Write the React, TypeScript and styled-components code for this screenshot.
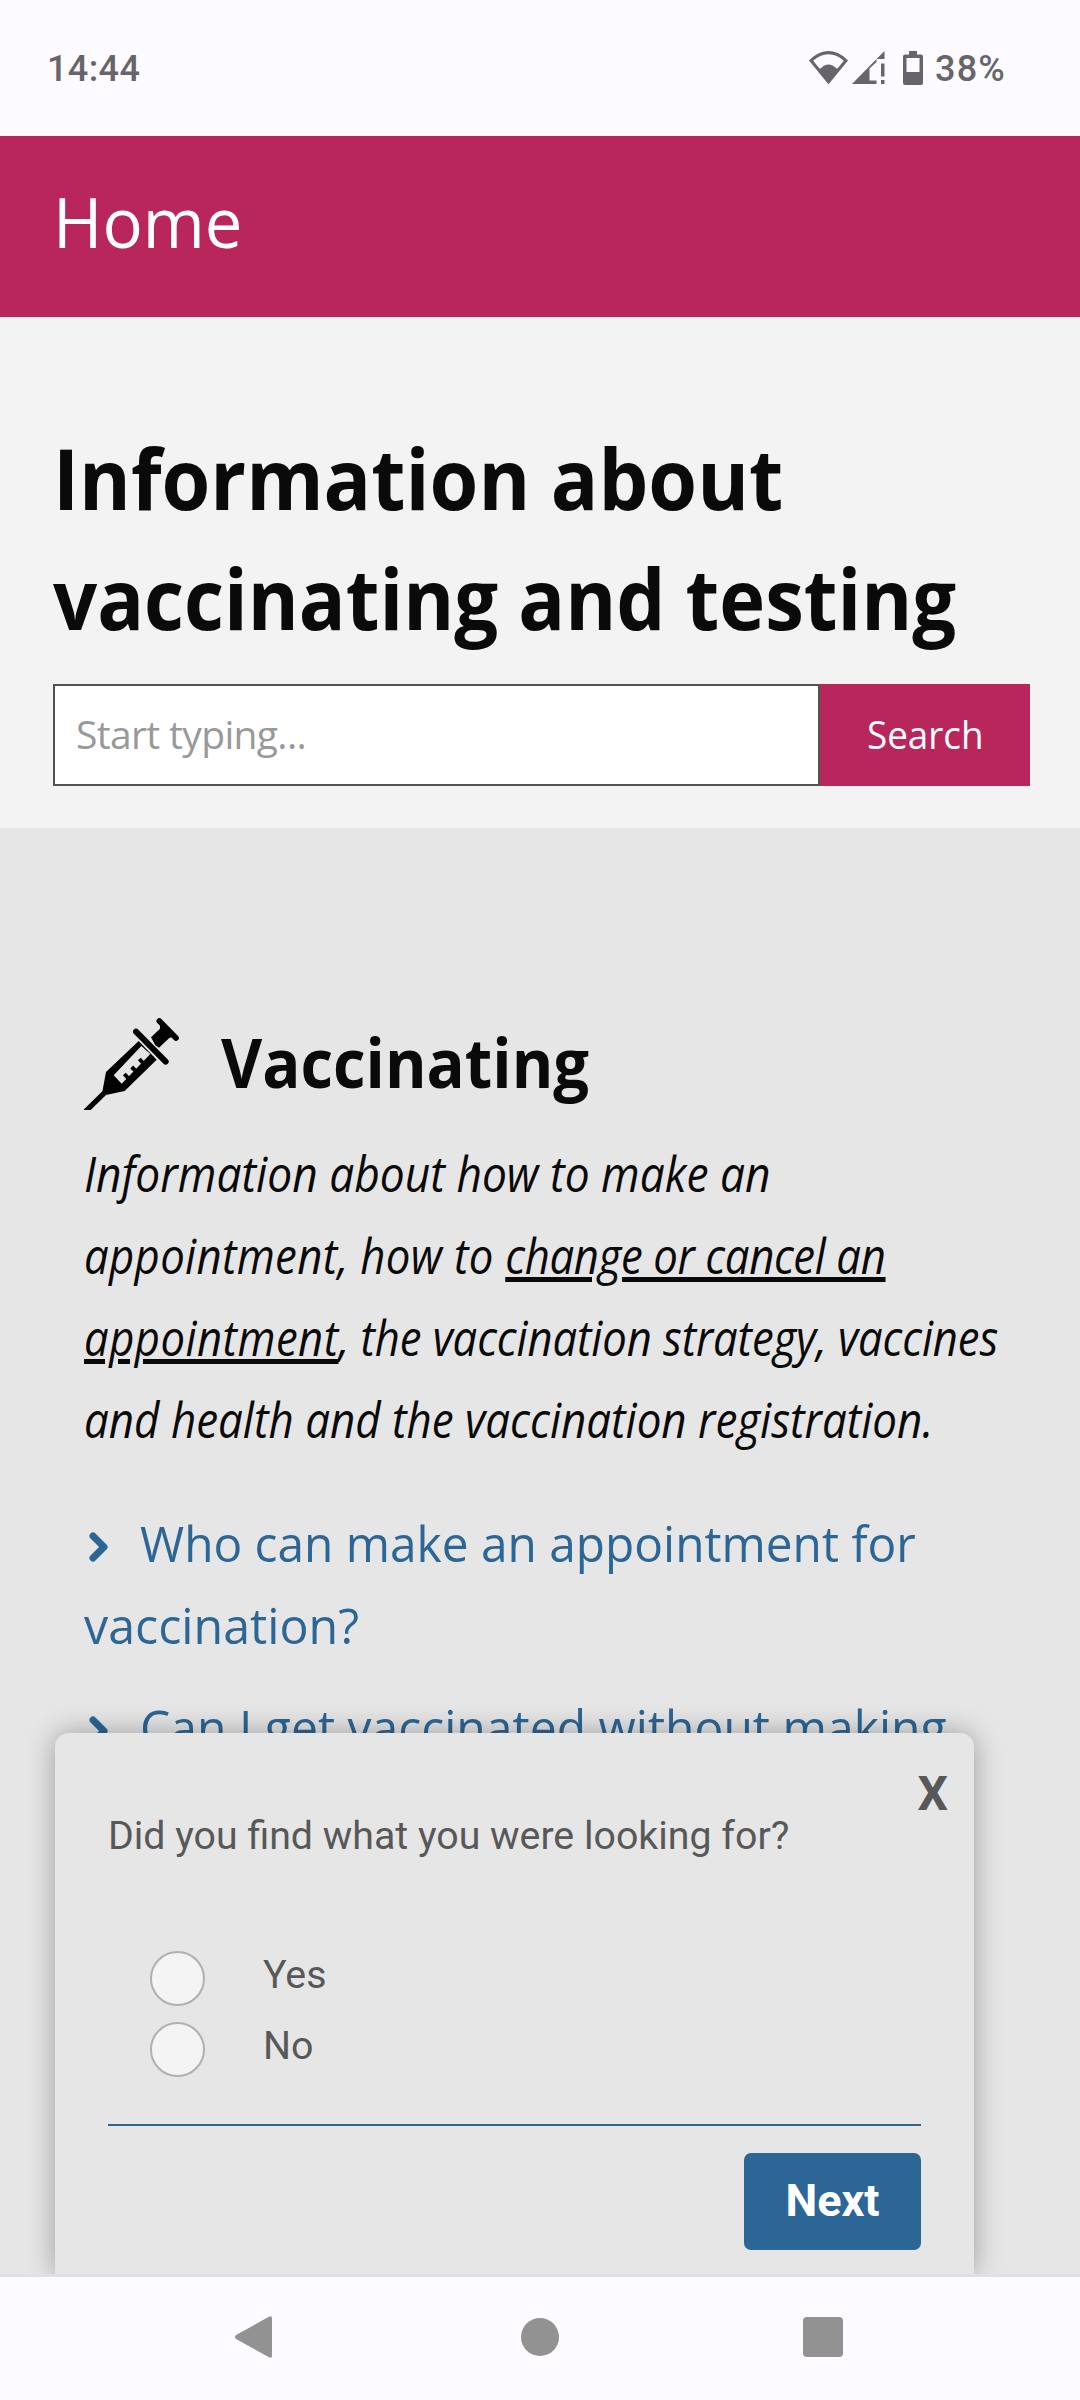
import React from "react";
import styled, { createGlobalStyle } from "styled-components";

const GlobalStyle = createGlobalStyle`
  *, *::before, *::after { box-sizing: border-box; }
  body { margin: 0; background: #fdfbff; }
  h1, h2, p, ul { margin: 0; padding: 0; }
`;

const Phone = styled.div`
  display: flex;
  flex-direction: column;
  width: 1080px;
  height: 2400px;
  overflow: hidden;
  font-family: "Open Sans", "Noto Sans", sans-serif;
  color: #0a0a0a;
`;

/* System bars */

const StatusBar = styled.header`
  display: flex;
  justify-content: space-between;
  height: 136px;
  padding: 47px 74px 0 47px;
  background: #fdfbff;
  color: #67656a;
  font: 500 36px/44px Roboto, sans-serif;
`;

const Clock = styled.span`letter-spacing: 0.4px;`;

const StatusIcons = styled.div`
  display: flex;
  align-items: flex-start;

  svg { margin-top: 4px; fill: currentColor; }
`;

const WifiIcon = styled.svg`margin-right: 4px;`;
const SignalIcon = styled.svg`margin-right: 18px;`;
const BatteryIcon = styled.svg`margin-right: 12px;`;
const BatteryLevel = styled.span`letter-spacing: 1.2px;`;

const NavBar = styled.nav`
  display: flex;
  flex: none;
  align-items: center;
  height: 126px;
  padding: 0 0 3px 234px;
  border-top: 3px solid #e0e0ec;
  background: #fdfbff;

  svg { fill: #929292; }
`;

const HomeIcon = styled.svg`margin: 0 244px 0 248px;`;

/* Page */

const Page = styled.main`
  position: relative;
  flex: 1;
  min-height: 0;
  overflow: hidden;
  background: #e6e6e6;
`;

/* One line of text, narrowed horizontally by its scale factor */
const Line = styled.span<{ $scale: number }>`
  display: block;
  width: max-content;
  white-space: nowrap;
  transform: scaleX(${(p) => p.$scale});
  transform-origin: left center;
`;

const Tracked = styled.span<{ $spacing: number }>`
  letter-spacing: ${(p) => p.$spacing}px;
`;

const TitleBar = styled.div`
  height: 181px;
  padding: 37px 53px 0;
  background: #b9265c;
  color: #fff;
  font-size: 70px;
  line-height: 96px;
`;

const Hero = styled.section`
  padding: 100px 50px 42px 53px;
  background: #f3f3f3;
`;

const Heading = styled.h1`
  font-size: 85px;
  font-weight: 700;
  line-height: 120px;
`;

const SearchForm = styled.div`
  display: flex;
  height: 102px;
  margin-top: 27px;
`;

const SearchInput = styled.input`
  flex: 1;
  min-width: 0;
  padding: 0 20px 4px 21px;
  border: 2px solid #535353;
  border-radius: 0;
  background: #fff;
  font: 39px "Open Sans", sans-serif;
  letter-spacing: -0.65px;

  &::placeholder { color: #999; opacity: 1; }
`;

const SearchButton = styled.button`
  display: flex;
  align-items: center;
  width: 210px;
  padding: 0 0 4px 47px;
  border: 0;
  background: #b9265c;
  color: #fff;
  font: 39px "Open Sans", sans-serif;
`;

const Topic = styled.section`
  padding: 186px 0 0 84px;
`;

const TopicHeader = styled.div`
  display: flex;
  align-items: flex-start;
  height: 96px;

  svg { margin-top: 4px; }
`;

const TopicTitle = styled.h2`
  margin-left: 42px;
  padding-top: 1px;
  font-size: 68.5px;
  font-weight: 700;
  line-height: 94px;
`;

const Intro = styled.p`
  margin-top: 22px;
  font-size: 49px;
  font-style: italic;
  line-height: 82px;
`;

const Underlined = styled.a<{ $spacing: number }>`
  color: inherit;
  letter-spacing: ${(p) => p.$spacing}px;
  text-decoration: underline;
  text-decoration-thickness: 5px;
  text-underline-offset: 3px;
`;

const LinkList = styled.ul`
  display: flex;
  flex-direction: column;
  gap: 20px;
  margin-top: 42px;
  list-style: none;
`;

const LinkItem = styled.li`
  color: #2c6696;
  font-size: 50px;
  line-height: 82px;
`;

const LinkLead = styled.div`
  display: flex;
  align-items: flex-start;
`;

const Chevron = styled.svg`
  flex: none;
  margin: 30px 32px 0 5px;
  fill: none;
  stroke: currentColor;
  stroke-width: 7;
  stroke-linecap: round;
  stroke-linejoin: round;
`;

/* Feedback survey */

const Survey = styled.aside`
  position: absolute;
  left: 55px;
  bottom: 0;
  display: flex;
  flex-direction: column;
  width: 919px;
  height: 541px;
  padding: 43px 53px 0;
  border-radius: 14px 14px 0 0;
  background: #e6e6e6;
  box-shadow: 0 0 28px rgba(0, 0, 0, 0.32);
  color: #585858;
  font: 39.3px/46px Roboto, sans-serif;
`;

const CloseButton = styled.button`
  align-self: flex-end;
  margin-right: -27px;
  padding: 0;
  border: 0;
  background: none;
  color: inherit;
  font: 700 48px/36px Roboto, sans-serif;
`;

const Question = styled.div`
  height: 46px;
  padding-top: 1px;
`;

const Options = styled.div`
  display: flex;
  flex-direction: column;
  gap: 16px;
  margin: 93px 0 0 42px;
`;

const Option = styled.label`
  display: flex;
  align-items: flex-start;
  gap: 58px;
  height: 55px;

  span { padding-top: 1px; }
`;

const Radio = styled.input`
  appearance: none;
  width: 55px;
  height: 55px;
  margin: 0;
  border: 2px solid #b0b0b0;
  border-radius: 50%;
  background: #f4f4f4;
`;

const SurveyFooter = styled.div`
  display: flex;
  justify-content: flex-end;
  margin-top: 47px;
  padding-top: 27px;
  border-top: 2px solid #2c6696;
`;

const NextButton = styled.button`
  width: 177px;
  height: 97px;
  padding: 0 0 2px;
  border: 0;
  border-radius: 7px;
  background: #2c6696;
  color: #fff;
  font: 700 45px/52px Roboto, sans-serif;
`;

function Syringe() {
  return (
    <svg width="95" height="92" viewBox="24 24 285 276" fill="#000" stroke="#000" strokeWidth="0">
      <path d="M79 244 L90 255 L44 300 H24 V298 Z" />
      <path d="M188 93 L90 186 L79 245 L90 255 L146 243 L242 149 Z M196 108 L223 132 L137 221 L113 196 Z" fillRule="evenodd" />
      <path d="M159 207 L145 192 M181 185 L167 171 M204 162 L190 147" strokeWidth="12" />
      <path d="M180 65 L269 155" strokeWidth="18" strokeLinecap="round" />
      <path d="M250 33 L300 84" strokeWidth="17" strokeLinecap="round" />
      <path d="M225 82 L252 56 Q254 46 249 36 L298 84 Q286 79 279 85 L249 113 L238 106 Z" />
    </svg>
  );
}

function LinkChevron() {
  return (
    <Chevron width="19" height="30" viewBox="0 0 19 30">
      <path d="M4 4 L15 15 L4 26" />
    </Chevron>
  );
}

export default function App() {
  return (
    <Phone>
      <GlobalStyle />
      <StatusBar>
        <Clock>14:44</Clock>
        <StatusIcons>
          <WifiIcon width="39" height="33" viewBox="0 0 39 33">
            <path d="M2 9.5 Q19.5 -6.2 37 9.5 L19.5 31 Z" fill="none" stroke="currentColor" strokeWidth="3" />
            <path d="M8.5 17.5 L11.5 17.5 Q19.5 9.5 27.5 17.5 L30.5 17.5 L19.5 32 Z" />
          </WifiIcon>
          <SignalIcon width="33" height="33" viewBox="0 0 33 33">
            <path d="M32.5 0 V8 H24.5 Z M24.5 8 V11 L17.5 17.5 V29.5 H24.5 V33 H0 Z M29 12.5 H32.5 V25.5 H29 Z M29 29 H32.5 V33 H29 Z" />
          </SignalIcon>
          <BatteryIcon width="20" height="34" viewBox="0 0 20 34">
            <path fillRule="evenodd" d="M6 0 H14 V3.5 H18 Q20 3.5 20 5.5 V32 Q20 34 18 34 H2 Q0 34 0 32 V5.5 Q0 3.5 2 3.5 H6 Z M3.5 7 V21 H16.5 V7 Z" />
          </BatteryIcon>
          <BatteryLevel>38%</BatteryLevel>
        </StatusIcons>
      </StatusBar>

      <Page>
        <TitleBar>
          <Line $scale={0.957}>Home</Line>
        </TitleBar>

        <Hero>
          <Heading>
            <Line $scale={0.928}>Information about</Line>
            <Line $scale={0.914}>vaccinating and testing</Line>
          </Heading>
          <SearchForm>
            <SearchInput placeholder="Start typing..." />
            <SearchButton>
              <Line $scale={0.944}>Search</Line>
            </SearchButton>
          </SearchForm>
        </Hero>

        <Topic>
          <TopicHeader>
            <Syringe />
            <TopicTitle>
              <Line $scale={0.925}>Vaccinating</Line>
            </TopicTitle>
          </TopicHeader>
          <Intro>
            <Line $scale={0.904}>Information about how to make an</Line>
            <Line $scale={0.893}>
              <Tracked $spacing={0.33}>appointment, how to </Tracked>
              <Underlined $spacing={-0.45}>change or cancel an</Underlined>
            </Line>
            <Line $scale={0.891}>
              <Underlined $spacing={0.5}>appointment</Underlined>
              <Tracked $spacing={-0.13}>, the vaccination strategy, vaccines</Tracked>
            </Line>
            <Line $scale={0.896}>and health and the vaccination registration.</Line>
          </Intro>
          <LinkList>
            <LinkItem>
              <LinkLead>
                <LinkChevron />
                <Line $scale={0.956}>Who can make an appointment for</Line>
              </LinkLead>
              <Line $scale={0.967}>vaccination?</Line>
            </LinkItem>
            <LinkItem>
              <LinkLead>
                <LinkChevron />
                <Line $scale={0.961}>Can I get vaccinated without making</Line>
              </LinkLead>
            </LinkItem>
          </LinkList>
        </Topic>

        <Survey>
          <CloseButton>X</CloseButton>
          <Question>Did you find what you were looking for?</Question>
          <Options>
            <Option>
              <Radio type="radio" name="found" />
              <span>Yes</span>
            </Option>
            <Option>
              <Radio type="radio" name="found" />
              <span>No</span>
            </Option>
          </Options>
          <SurveyFooter>
            <NextButton>Next</NextButton>
          </SurveyFooter>
        </Survey>
      </Page>

      <NavBar>
        <svg width="39" height="42" viewBox="0 0 39 42">
          <path d="M35 0.8 Q38 -1 38 2.5 V39.5 Q38 43 35 41.2 L2 23 Q0 21 2 19 Z" />
        </svg>
        <HomeIcon width="38" height="38" viewBox="0 0 38 38">
          <circle cx="19" cy="19" r="19" />
        </HomeIcon>
        <svg width="40" height="40" viewBox="0 0 40 40">
          <rect width="40" height="40" rx="4" />
        </svg>
      </NavBar>
    </Phone>
  );
}
